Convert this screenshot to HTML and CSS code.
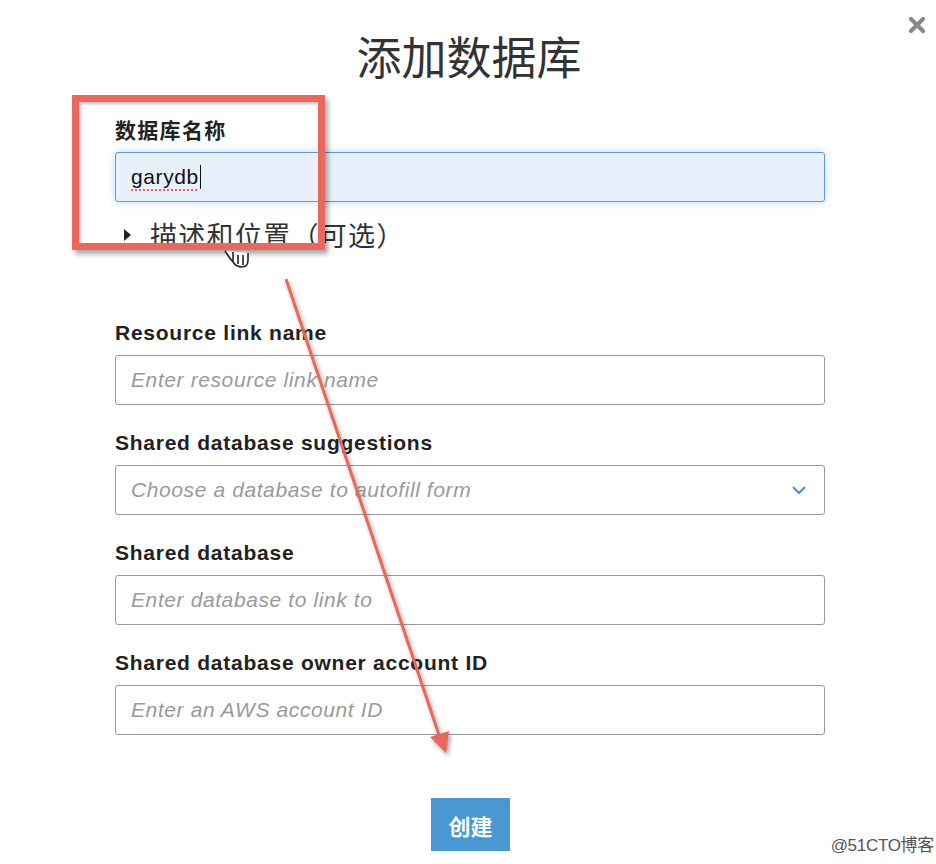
FILE: index.html
```html
<!DOCTYPE html>
<html lang="zh-CN">
<head>
<meta charset="utf-8">
<title>添加数据库</title>
<link rel="stylesheet" href="styles.css">
</head>
<body>
<div class="modal">
  <button class="close" aria-label="close">
    <svg width="18" height="18" viewBox="0 0 18 18"><path d="M3 3 L15 15 M15 3 L3 15" stroke="#888" stroke-width="4.2" stroke-linecap="round"/></svg>
  </button>
  <h1 class="title">添加数据库</h1>
  <form class="form">
    <div class="field first">
      <label class="label cjk">数据库名称</label>
      <div class="input focused"><span class="typed">garydb</span><span class="caret"></span></div>
    </div>
    <div class="disclosure"><span class="tri"></span><span class="disc-text">描述和位置（可选）</span></div>

    <div class="field">
      <label class="label">Resource link name</label>
      <input class="input" placeholder="Enter resource link name">
    </div>
    <div class="field">
      <label class="label">Shared database suggestions</label>
      <div class="input select"><span class="ph">Choose a database to autofill form</span>
        <svg class="chev" width="16" height="10" viewBox="0 0 16 10"><path d="M2 2 L8 8 L14 2" fill="none" stroke="#4a90d0" stroke-width="2"/></svg>
      </div>
    </div>
    <div class="field">
      <label class="label">Shared database</label>
      <input class="input" placeholder="Enter database to link to">
    </div>
    <div class="field">
      <label class="label">Shared database owner account ID</label>
      <input class="input" placeholder="Enter an AWS account ID">
    </div>
    <div class="actions"><button type="button" class="create">创建</button></div>
  </form>

  <div class="annot-box"></div>
  <svg class="annot-arrow" width="936" height="864" viewBox="0 0 936 864">
    <line x1="286" y1="279" x2="440" y2="738" stroke="#e9685b" stroke-width="3"/>
    <polygon points="446,753 449,731 430,737" fill="#e9685b"/>
  </svg>
  <svg class="cursor" width="30" height="22" viewBox="0 0 30 22">
    <path d="M3 2 C6 6 8 10 11 13 C13 16 16 18 20 18 C24 18 26 15 26 11 L26 4 M11 13 L11 3 M16 15 L16 6 M21 16 L21 6" fill="#fff" stroke="#222" stroke-width="1.6" stroke-linejoin="round"/>
  </svg>
  <div class="watermark">@51CTO博客</div>
</div>
</body>
</html>
```

FILE: styles.css
```css
html, body {
  margin: 0;
  padding: 0;
  background: #fff;
}
body {
  font-family: "Liberation Sans", Arial, "Noto Sans CJK SC", sans-serif;
  color: #333;
}
.modal {
  position: relative;
  width: 936px;
  height: 864px;
  overflow: hidden;
}
.close {
  position: absolute;
  top: 16px;
  left: 907px;
  width: 20px;
  height: 20px;
  padding: 0;
  border: 0;
  background: none;
}
.title {
  margin: 27px 0 0;
  text-align: center;
  font-family: "Noto Sans CJK SC", sans-serif;
  font-weight: 400;
  font-size: 45px;
  line-height: 57px;
  color: #333;
  padding-left: 2px;
}
.form {
  margin: 33px 0 0 115px;
  width: 710px;
}
.field {
  display: flex;
  flex-direction: column;
  gap: 10px;
  margin-bottom: 26px;
}
.field.first {
  gap: 11px;
  margin-bottom: 0;
}
.label {
  font-weight: 700;
  font-size: 21px;
  line-height: 24px;
  letter-spacing: 0.75px;
  color: #222;
}
.label.cjk {
  font-family: "Noto Sans CJK SC", sans-serif;
  font-size: 21px;
  letter-spacing: 1.3px;
}
.input {
  box-sizing: border-box;
  width: 710px;
  height: 50px;
  border: 1px solid #969b9f;
  border-radius: 3px;
  padding: 0 15px;
  font-family: "Liberation Sans", Arial, sans-serif;
  font-size: 21px;
  letter-spacing: 0.6px;
  color: #222;
  background: #fff;
  display: flex;
  align-items: center;
  outline: none;
  margin: 0;
}
.input::placeholder {
  color: #9a9a9a;
  font-style: italic;
}
.ph {
  color: #9a9a9a;
  font-style: italic;
  flex: 1;
}
.select .chev {
  margin-right: 2px;
}
.input.focused {
  background: #e8f0fc;
  border-color: #5a9ad6;
  box-shadow: 0 0 8px rgba(74, 144, 217, 0.35);
}
.typed {
  color: #111;
  text-decoration: underline dotted #e0605a;
  text-decoration-thickness: 2px;
  text-underline-offset: 5px;
}
.caret {
  display: inline-block;
  width: 1px;
  height: 24px;
  background: #111;
  margin-left: 1px;
}
.disclosure {
  display: flex;
  align-items: center;
  height: 30px;
  margin: 18px 0 71px;
}
.tri {
  width: 0;
  height: 0;
  border-left: 7px solid #222;
  border-top: 6px solid transparent;
  border-bottom: 6px solid transparent;
  margin: 0 19px 0 9px;
}
.disc-text {
  font-family: "Noto Sans CJK SC", sans-serif;
  font-size: 27px;
  line-height: 30px;
  letter-spacing: 1.3px;
  color: #333;
}
.actions {
  display: flex;
  justify-content: center;
  margin-top: 63px;
}
.create {
  width: 79px;
  height: 53px;
  border: 0;
  background: #4a98d3;
  color: #fff;
  font-family: "Noto Sans CJK SC", sans-serif;
  font-weight: 700;
  font-size: 22px;
  padding: 0;
  margin-left: 1px;
}
.annot-box {
  position: absolute;
  left: 72px;
  top: 95px;
  width: 239px;
  height: 141px;
  border: 7px solid #e9685b;
  box-shadow: 3px 4px 5px rgba(0, 0, 0, 0.35), inset 2px 2px 3px rgba(0, 0, 0, 0.25);
  pointer-events: none;
}
.annot-arrow {
  position: absolute;
  left: 0;
  top: 0;
  pointer-events: none;
  filter: drop-shadow(2px 3px 2px rgba(0, 0, 0, 0.35));
}
.cursor {
  position: absolute;
  left: 222px;
  top: 249px;
  pointer-events: none;
}
.watermark {
  position: absolute;
  right: 2px;
  bottom: 8px;
  font-family: "Liberation Sans", "Noto Sans CJK SC", sans-serif;
  font-size: 17px;
  color: #555;
  letter-spacing: -0.3px;
}
```
